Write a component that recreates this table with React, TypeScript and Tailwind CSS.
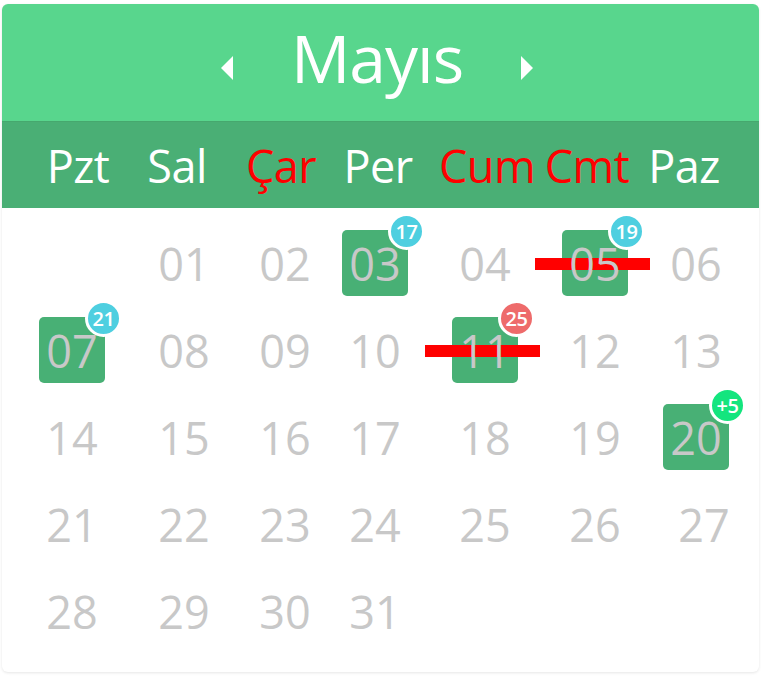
import React from "react";

type Cell = {
  n: string;
  box?: boolean;
  badge?: string;
  badgeColor?: string;
  strike?: boolean;
  shift?: boolean;
} | null;

const CYAN = "cyan";
const RED = "red";
const GREEN = "green";

const weeks: Cell[][] = [
  [
    null,
    { n: "01" },
    { n: "02" },
    { n: "03", box: true, badge: "17", badgeColor: CYAN },
    { n: "04" },
    { n: "05", box: true, badge: "19", badgeColor: CYAN, strike: true },
    { n: "06" },
  ],
  [
    { n: "07", box: true, badge: "21", badgeColor: CYAN },
    { n: "08" },
    { n: "09" },
    { n: "10" },
    { n: "11", box: true, badge: "25", badgeColor: RED, strike: true },
    { n: "12" },
    { n: "13" },
  ],
  [
    { n: "14" },
    { n: "15" },
    { n: "16" },
    { n: "17" },
    { n: "18" },
    { n: "19" },
    { n: "20", box: true, badge: "+5", badgeColor: GREEN },
  ],
  [
    { n: "21" },
    { n: "22" },
    { n: "23" },
    { n: "24" },
    { n: "25" },
    { n: "26" },
    { n: "27", shift: true },
  ],
  [{ n: "28" }, { n: "29" }, { n: "30" }, { n: "31" }, null, null, null],
];

const days: { t: string; red?: boolean }[] = [
  { t: "Pzt" },
  { t: "Sal" },
  { t: "Çar", red: true },
  { t: "Per" },
  { t: "Cum", red: true },
  { t: "Cmt", red: true },
  { t: "Paz" },
];

function Badge({ text, color }: { text: string; color: string }) {
  const bg =
    color === CYAN ? "bg-[#4ecfe0]" : color === RED ? "bg-[#ee6b6b]" : "bg-[#14e57e]";
  return (
    <div
      className={`absolute -right-[17px] -top-[17px] z-30 flex h-[37px] w-[37px] items-center justify-center rounded-full border-[3px] border-white ${bg}`}
    >
      <span className="text-[20px] font-semibold leading-none tracking-[-0.5px] text-white">
        {text}
      </span>
    </div>
  );
}

function DayCell({ cell }: { cell: Cell }) {
  if (!cell) return <div className="h-[87px]" />;
  return (
    <div
      className={`relative flex h-[87px] items-center justify-center ${cell.shift ? "pl-[16px]" : ""}`}
    >
      {cell.strike && (
        <div className="absolute left-1/2 top-1/2 z-10 h-[12px] w-[115px] -translate-x-[60px] -translate-y-[5px] bg-[#ff0000]" />
      )}
      {cell.box ? (
        <div className="relative flex h-[66px] w-[66px] items-center justify-center rounded-[5px] bg-[#48b075]">
          <span className="relative z-20 text-[45px] leading-none text-[#c8c8c8]">
            {cell.n}
          </span>
          {cell.badge && <Badge text={cell.badge} color={cell.badgeColor!} />}
        </div>
      ) : (
        <span className="relative z-20 text-[45px] leading-none text-[#c8c8c8]">
          {cell.n}
        </span>
      )}
    </div>
  );
}

export default function App() {
  return (
    <div
      className="min-h-[676px] w-[761px] bg-white pl-[2px] pt-[4px]"
      style={{ fontFamily: '"Open Sans", "Noto Sans", sans-serif' }}
    >
      <div className="w-[757px] overflow-hidden rounded-[6px] bg-white shadow-[0_1px_3px_rgba(0,0,0,0.10)]">
        {/* Header */}
        <div className="flex h-[117px] justify-center bg-[#58d68d] pr-[7px]">
          <svg className="mt-[52px] h-[24px] w-[12px]" viewBox="0 0 12 24">
            <polygon points="12,0 12,24 0,12" fill="#ffffff" />
          </svg>
          <div className="mt-[20px] w-[288px] text-center text-[66px] leading-none tracking-[-1px] text-white">
            Mayıs
          </div>
          <svg className="mt-[52px] h-[24px] w-[12px]" viewBox="0 0 12 24">
            <polygon points="0,0 0,24 12,12" fill="#ffffff" />
          </svg>
        </div>
        {/* Weekdays */}
        <div className="grid h-[87px] grid-cols-[80px_118px_90px_104px_114px_86px_108px] border-t border-[#46a86e] bg-[#4aaf75] pl-[36px] pt-[21px]">
          {days.map((d) => (
            <div
              key={d.t}
              className={`flex justify-center whitespace-nowrap text-[45px] leading-none tracking-[-0.5px] ${d.red ? "text-[#ff0000]" : "text-white"}`}
            >
              {d.t}
            </div>
          ))}
        </div>
        {/* Body */}
        <div className="pb-[17.5px] pl-[14px] pt-[11.5px]">
          {weeks.map((w, i) => (
            <div
              key={i}
              className="grid grid-cols-[112px_112px_90px_90px_130px_90px_112px]"
            >
              {w.map((c, j) => (
                <DayCell key={j} cell={c} />
              ))}
            </div>
          ))}
        </div>
      </div>
    </div>
  );
}
